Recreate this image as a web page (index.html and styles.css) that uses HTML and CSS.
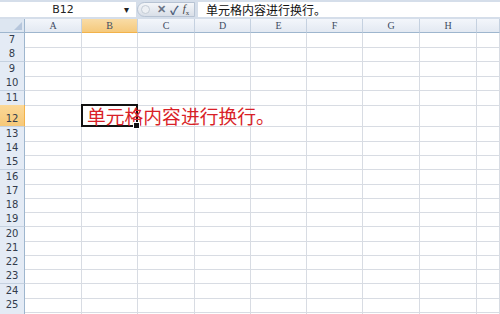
FILE: index.html
```html
<!DOCTYPE html>
<html>
<head>
<meta charset="utf-8">
<link rel="stylesheet" href="styles.css">
</head>
<body>
<div class="app">
  <div class="fbar">
    <div class="namebox"><span class="name">B12</span><span class="drop">▾</span></div>
    <div class="pill">
      <span class="dot"></span>
      <span class="x">✕</span>
      <span class="ok">✓</span>
      <span class="fx"><i>f</i><sub>x</sub></span>
    </div>
    <div class="formula">单元格内容进行换行。</div>
  </div>
  <div class="sheet">
    <div class="row hdr"><div class="corner"><span class="tri"></span></div><div class="ch">A</div><div class="ch sel">B</div><div class="ch">C</div><div class="ch">D</div><div class="ch">E</div><div class="ch">F</div><div class="ch">G</div><div class="ch">H</div><div class="ch"></div></div>
    <div class="row r14"><div class="rh">7</div><i></i><i></i><i></i><i></i><i></i><i></i><i></i><i></i><i></i></div>
    <div class="row r15"><div class="rh">8</div><i></i><i></i><i></i><i></i><i></i><i></i><i></i><i></i><i></i></div>
    <div class="row r14"><div class="rh">9</div><i></i><i></i><i></i><i></i><i></i><i></i><i></i><i></i><i></i></div>
    <div class="row r15"><div class="rh">10</div><i></i><i></i><i></i><i></i><i></i><i></i><i></i><i></i><i></i></div>
    <div class="row r14"><div class="rh">11</div><i></i><i></i><i></i><i></i><i></i><i></i><i></i><i></i><i></i></div>
    <div class="row r22"><div class="rh sel">12</div><i></i><i class="active"><span class="val">单元格内容进行换行。</span><span class="handle"></span></i><i></i><i></i><i></i><i></i><i></i><i></i><i></i></div>
    <div class="row r14"><div class="rh">13</div><i></i><i></i><i></i><i></i><i></i><i></i><i></i><i></i><i></i></div>
    <div class="row r14"><div class="rh">14</div><i></i><i></i><i></i><i></i><i></i><i></i><i></i><i></i><i></i></div>
    <div class="row r15"><div class="rh">15</div><i></i><i></i><i></i><i></i><i></i><i></i><i></i><i></i><i></i></div>
    <div class="row r14"><div class="rh">16</div><i></i><i></i><i></i><i></i><i></i><i></i><i></i><i></i><i></i></div>
    <div class="row r14"><div class="rh">17</div><i></i><i></i><i></i><i></i><i></i><i></i><i></i><i></i><i></i></div>
    <div class="row r14"><div class="rh">18</div><i></i><i></i><i></i><i></i><i></i><i></i><i></i><i></i><i></i></div>
    <div class="row r15"><div class="rh">19</div><i></i><i></i><i></i><i></i><i></i><i></i><i></i><i></i><i></i></div>
    <div class="row r14"><div class="rh">20</div><i></i><i></i><i></i><i></i><i></i><i></i><i></i><i></i><i></i></div>
    <div class="row r14"><div class="rh">21</div><i></i><i></i><i></i><i></i><i></i><i></i><i></i><i></i><i></i></div>
    <div class="row r14"><div class="rh">22</div><i></i><i></i><i></i><i></i><i></i><i></i><i></i><i></i><i></i></div>
    <div class="row r15"><div class="rh">23</div><i></i><i></i><i></i><i></i><i></i><i></i><i></i><i></i><i></i></div>
    <div class="row r14"><div class="rh">24</div><i></i><i></i><i></i><i></i><i></i><i></i><i></i><i></i><i></i></div>
    <div class="row r14"><div class="rh">25</div><i></i><i></i><i></i><i></i><i></i><i></i><i></i><i></i><i></i></div>
    <div class="row r14"><div class="rh"></div><i></i><i></i><i></i><i></i><i></i><i></i><i></i><i></i><i></i></div>
  </div>
</div>
</body>
</html>
```
FILE: styles.css
```css
html, body {
  margin: 0;
  padding: 0;
  background: #ffffff;
}
.app {
  width: 500px;
  height: 314px;
  overflow: hidden;
  font-family: "Liberation Sans", "Noto Sans CJK SC", sans-serif;
}
.fbar {
  height: 19px;
  box-sizing: border-box;
  padding-top: 2px;
  padding-bottom: 2px;
  display: flex;
  background: #d5deea;
}
.namebox {
  width: 136px;
  background: #ffffff;
  display: flex;
  align-items: center;
}
.name {
  flex: 1;
  text-align: center;
  font-family: "DejaVu Sans", sans-serif;
  font-size: 11px;
  color: #222;
  padding-left: 2px;
}
.drop {
  width: 12px;
  font-size: 10px;
  color: #222;
  line-height: 1;
}
.pill {
  width: 58px;
  margin-left: 1px;
  border-radius: 8px 0 0 8px;
  background: linear-gradient(#f4f6f9, #d9dfe8);
  border: 1px solid #b7c3d3;
  box-sizing: border-box;
  display: flex;
  align-items: center;
  gap: 4px;
  padding-left: 3px;
  font-size: 11px;
}
.dot {
  width: 7px;
  height: 7px;
  border-radius: 50%;
  border: 1px solid #c4ccd6;
  background: #edf0f4;
  margin-right: 3px;
}
.x { color: #6b7586; font-weight: bold; font-size: 11px; }
.ok { color: #4b5d7a; font-weight: bold; font-size: 12px; }
.fx {
  font-family: "Liberation Serif", serif;
  color: #444;
  font-size: 11px;
}
.fx sub { font-size: 7px; }
.formula {
  flex: 1;
  margin-left: 3px;
  background: #ffffff;
  font-family: "Noto Sans CJK SC", sans-serif;
  font-size: 12px;
  line-height: 15px;
  padding-left: 8px;
  color: #111;
}
.sheet {
  display: flex;
  flex-direction: column;
}
.row {
  display: grid;
  grid-template-columns: 25px 57px 56px 57px 56px 56px 56px 57px 57px 23px;
}
.r14 { height: 14px; }
.r15 { height: 15px; }
.r22 { height: 22px; }
.hdr { height: 14px; }
.row > i {
  display: block;
  border-right: 1px solid #d8dce3;
  border-bottom: 1px solid #d8dce3;
  box-sizing: border-box;
  position: relative;
}
.corner {
  background: #dde6f1;
  border-right: 1px solid #9eb6ce;
  border-bottom: 1px solid #9eb6ce;
  box-sizing: border-box;
  position: relative;
}
.tri {
  position: absolute;
  right: 2px;
  bottom: 2px;
  width: 0;
  height: 0;
  border-left: 8px solid transparent;
  border-bottom: 8px solid #b6c6dc;
}
.ch {
  background: linear-gradient(#f3f6fb, #e3e9f2);
  border-right: 1px solid #c5d1e0;
  border-bottom: 1px solid #9eb6ce;
  box-sizing: border-box;
  text-align: center;
  font-family: "Liberation Serif", serif;
  font-size: 10px;
  line-height: 13px;
  color: #3d4b62;
}
.ch.sel {
  background: linear-gradient(#f9dca6, #f5c97c);
  border-bottom-color: #f2b24a;
}
.rh {
  background: #e4ebf5;
  border-right: 1px solid #9eb6ce;
  border-bottom: 1px solid #c5d1e0;
  box-sizing: border-box;
  text-align: center;
  font-family: "DejaVu Sans", sans-serif;
  font-size: 10px;
  line-height: 14px;
  color: #333c4c;
  display: flex;
  align-items: flex-end;
  justify-content: center;
}
.rh.sel {
  background: linear-gradient(#fbd898, #f6c878);
  border-right-color: #f2b24a;
}
.row > i.active {
  border: 2px solid #111;
  margin-left: -1px;
  margin-top: -1px;
}
.val {
  position: absolute;
  left: 4px;
  top: 0px;
  white-space: nowrap;
  font-style: normal;
  font-family: "Noto Sans CJK SC", sans-serif;
  font-size: 18.8px;
  line-height: 20px;
  color: #d91f28;
  z-index: 2;
}
.handle {
  position: absolute;
  right: -4px;
  bottom: -4px;
  width: 5px;
  height: 5px;
  background: #111;
  border: 1px solid #fff;
  z-index: 3;
}
```
